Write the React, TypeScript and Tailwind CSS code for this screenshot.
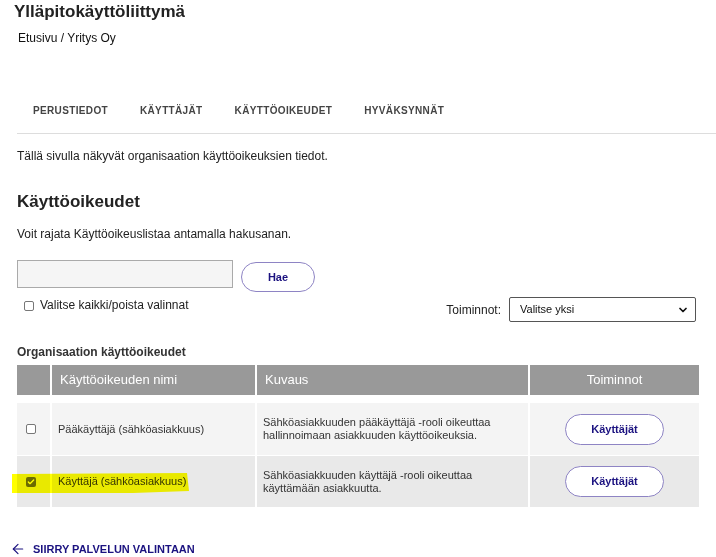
import { ArrowLeft, ChevronDown, Check } from 'lucide-react';

const tabs = ['Perustiedot', 'Käyttäjät', 'Käyttöoikeudet', 'Hyväksynnät'];

const rows = [
  {
    name: 'Pääkäyttäjä (sähköasiakkuus)',
    desc: ['Sähköasiakkuuden pääkäyttäjä -rooli oikeuttaa', 'hallinnoimaan asiakkuuden käyttöoikeuksia.'],
    checked: false,
    bg: 'bg-[#f4f4f4]',
    h: 'h-[52px]',
  },
  {
    name: 'Käyttäjä (sähköasiakkuus)',
    desc: ['Sähköasiakkuuden käyttäjä -rooli oikeuttaa', 'käyttämään asiakkuutta.'],
    checked: true,
    bg: 'bg-[#e9e9e9]',
    h: 'h-[51px]',
  },
];

function PillButton({ label }: { label: string }) {
  return (
    <button className="h-[31px] w-[99px] rounded-full border border-[#8e84c4] bg-white text-[11px] font-bold text-[#1b1280]">
      {label}
    </button>
  );
}

export default function App() {
  return (
    <div className="relative h-[557px] w-[716px] overflow-hidden bg-white font-['Liberation_Sans',Arial,sans-serif] text-[#222]">
      {/* Header */}
      <h1 className="ml-[14px] pt-[1px] text-[17px] font-bold leading-[22px] text-[#222]">Ylläpitokäyttöliittymä</h1>
      <div className="ml-[18px] mt-[8px] text-[12px] leading-[15px] text-[#111]">Etusivu / Yritys Oy</div>

      {/* Tabs */}
      <nav className="ml-[17px] mt-[57px] flex h-[31px] items-start border-b border-[#dddddd] pl-[16px]">
        {tabs.map((t, i) => (
          <span
            key={t}
            className={`text-[10px] font-bold uppercase leading-[16px] tracking-[0.035em] text-[#444] ${i < tabs.length - 1 ? 'mr-[32px]' : ''}`}
          >
            {t}
          </span>
        ))}
      </nav>

      <div className="pl-[17px]">
        <p className="mt-[15px] text-[12px] leading-[15px] text-[#222]">
          Tällä sivulla näkyvät organisaation käyttöoikeuksien tiedot.
        </p>

        <h2 className="mt-[27px] text-[17px] font-bold leading-[22px] text-[#222]">Käyttöoikeudet</h2>
        <p className="mt-[14px] text-[12px] leading-[15px] text-[#222]">
          Voit rajata Käyttöoikeuslistaa antamalla hakusanan.
        </p>

        {/* Search */}
        <div className="mt-[18px] flex items-start gap-[8px]">
          <div className="h-[28px] w-[216px] border border-[#aaaaaa] bg-[#f5f5f5]" />
          <button className="mt-[2px] h-[30px] w-[74px] rounded-full border border-[#8e84c4] bg-white text-[11px] font-bold text-[#1b1280]">
            Hae
          </button>
        </div>

        <div className="flex items-start justify-between pr-[20px]">
          <label className="ml-[7px] mt-[6px] flex items-center gap-[6px] text-[12px] leading-[15px] text-[#222]">
            <span className="h-[10px] w-[10px] rounded-[2px] border border-[#777] bg-white" />
            Valitse kaikki/poista valinnat
          </label>
          <div className="mt-[5px] flex items-center gap-[8px]">
            <span className="text-[12px] text-[#222]">Toiminnot:</span>
            <div className="flex h-[25px] w-[187px] items-center justify-between rounded-[2px] border border-[#555] bg-white pl-[10px] pr-[6px] text-[11px] text-[#111]">
              Valitse yksi
              <ChevronDown className="h-[12px] w-[12px]" strokeWidth={3.5} />
            </div>
          </div>
        </div>

        <div className="mt-[23px] text-[12px] font-bold leading-[15px] text-[#333]">Organisaation käyttöoikeudet</div>

        {/* Table */}
        <div className="relative mt-[5px] w-[682px]">
          <div className="grid h-[30px] grid-cols-[33px_203px_271px_169px] gap-x-[2px] text-[13px] text-white">
            <div className="bg-[#999999]" />
            <div className="flex items-center bg-[#999999] pl-[8px]">Käyttöoikeuden nimi</div>
            <div className="flex items-center bg-[#999999] pl-[8px]">Kuvaus</div>
            <div className="flex items-center justify-center bg-[#999999]">Toiminnot</div>
          </div>
          <div className="mt-[8px] flex flex-col gap-[1px]">
            {rows.map((r) => (
              <div key={r.name} className={`grid grid-cols-[33px_203px_271px_169px] gap-x-[2px] ${r.h}`}>
                <div className={`flex items-center pl-[9px] ${r.bg}`}>
                  {r.checked ? (
                    <span className="flex h-[10px] w-[10px] items-center justify-center rounded-[2px] bg-[#6b6b6b]">
                      <Check className="h-[8px] w-[8px] text-white" strokeWidth={4} />
                    </span>
                  ) : (
                    <span className="h-[10px] w-[10px] rounded-[2px] border border-[#777] bg-white" />
                  )}
                </div>
                <div className={`flex items-center pl-[6px] text-[11px] text-[#333] ${r.bg}`}>{r.name}</div>
                <div className={`flex flex-col justify-center pl-[6px] text-[11px] leading-[13px] text-[#333] ${r.bg}`}>
                  {r.desc.map((d) => (
                    <span key={d}>{d}</span>
                  ))}
                </div>
                <div className={`flex items-center justify-center ${r.bg}`}>
                  <PillButton label="Käyttäjät" />
                </div>
              </div>
            ))}
          </div>
          {/* Yellow marker highlight */}
          <svg
            className="pointer-events-none absolute left-[-6px] top-[106px] mix-blend-multiply"
            width="182"
            height="24"
            viewBox="0 0 182 24"
          >
            <path d="M1 3 L176 2 L178 20 L122 22 L1 22 Z" fill="#ffff00" />
          </svg>
        </div>
      </div>

      {/* Back link */}
      <div className="ml-[10px] mt-[34px] flex items-center gap-[7px] text-[11px] font-bold uppercase text-[#1b1280]">
        <ArrowLeft className="h-[16px] w-[16px]" strokeWidth={1.75} />
        Siirry palvelun valintaan
      </div>
    </div>
  );
}
